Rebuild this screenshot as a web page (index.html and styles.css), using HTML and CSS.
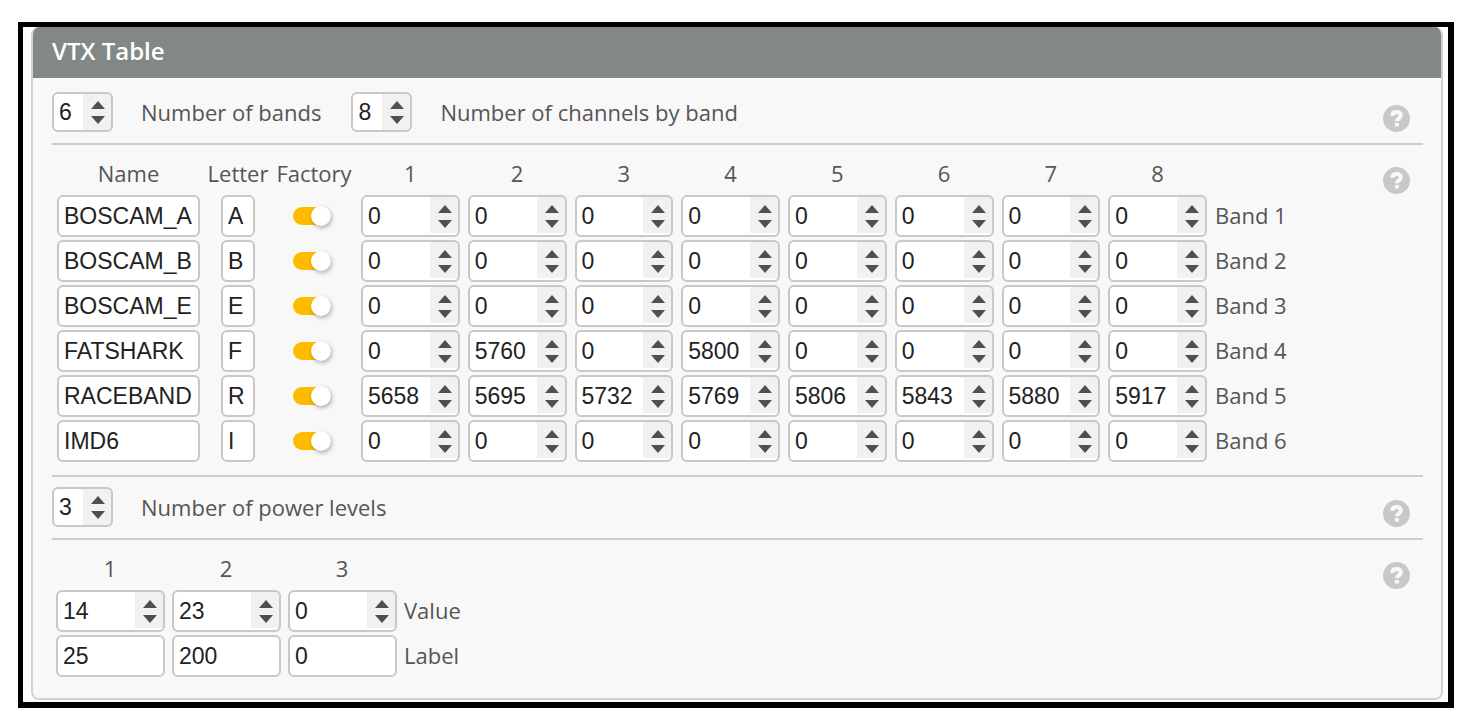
FILE: index.html
```html
<!DOCTYPE html>
<html lang="en">
<head>
<meta charset="utf-8">
<title>VTX Table</title>
<link rel="stylesheet" href="styles.css">
</head>
<body>
<main class="frame">
  <section class="panel">
    <h1 class="panel-title">VTX Table</h1>
    <div class="panel-body">
      <div class="section counts">
        <input class="field number count" type="number" id="bands" value="6">
        <label class="count-label" for="bands">Number of bands</label>
        <input class="field number count" type="number" id="channels" value="8">
        <label class="count-label" for="channels">Number of channels by band</label>
        <button class="help" type="button" aria-label="Help on bands and channels"><svg viewBox="0 0 27 27"><circle cx="13.500" cy="13.500" r="13.500"/><path d="M9.200 10.900C9.300 8.300 11.100 7 13.500 7c2.500 0 4.300 1.200 4.300 3.500 0 2.900-3.900 2.800-3.900 5.700M13.900 18v3.500"/></svg></button>
      </div>
      <div class="section">
        <table class="bands">
          <colgroup><col class="col-name"><col class="col-letter"><col class="col-factory"><col span="8"><col class="col-band"></colgroup>
          <thead>
            <tr><th>Name</th><th>Letter</th><th>Factory</th><th>1</th><th>2</th><th>3</th><th>4</th><th>5</th><th>6</th><th>7</th><th>8</th><td></td></tr>
          </thead>
          <tbody>
            <tr>
              <td><input class="field name" aria-label="Band 1 name" value="BOSCAM_A"></td>
              <td><input class="field letter" aria-label="Band 1 letter" value="A"></td>
              <td><input class="toggle" type="checkbox" aria-label="Band 1 factory" checked></td>
              <td><input class="field number" type="number" aria-label="Band 1 channel 1" value="0"></td>
              <td><input class="field number" type="number" aria-label="Band 1 channel 2" value="0"></td>
              <td><input class="field number" type="number" aria-label="Band 1 channel 3" value="0"></td>
              <td><input class="field number" type="number" aria-label="Band 1 channel 4" value="0"></td>
              <td><input class="field number" type="number" aria-label="Band 1 channel 5" value="0"></td>
              <td><input class="field number" type="number" aria-label="Band 1 channel 6" value="0"></td>
              <td><input class="field number" type="number" aria-label="Band 1 channel 7" value="0"></td>
              <td><input class="field number" type="number" aria-label="Band 1 channel 8" value="0"></td>
              <th class="row-label" scope="row">Band 1</th>
            </tr>
            <tr>
              <td><input class="field name" aria-label="Band 2 name" value="BOSCAM_B"></td>
              <td><input class="field letter" aria-label="Band 2 letter" value="B"></td>
              <td><input class="toggle" type="checkbox" aria-label="Band 2 factory" checked></td>
              <td><input class="field number" type="number" aria-label="Band 2 channel 1" value="0"></td>
              <td><input class="field number" type="number" aria-label="Band 2 channel 2" value="0"></td>
              <td><input class="field number" type="number" aria-label="Band 2 channel 3" value="0"></td>
              <td><input class="field number" type="number" aria-label="Band 2 channel 4" value="0"></td>
              <td><input class="field number" type="number" aria-label="Band 2 channel 5" value="0"></td>
              <td><input class="field number" type="number" aria-label="Band 2 channel 6" value="0"></td>
              <td><input class="field number" type="number" aria-label="Band 2 channel 7" value="0"></td>
              <td><input class="field number" type="number" aria-label="Band 2 channel 8" value="0"></td>
              <th class="row-label" scope="row">Band 2</th>
            </tr>
            <tr>
              <td><input class="field name" aria-label="Band 3 name" value="BOSCAM_E"></td>
              <td><input class="field letter" aria-label="Band 3 letter" value="E"></td>
              <td><input class="toggle" type="checkbox" aria-label="Band 3 factory" checked></td>
              <td><input class="field number" type="number" aria-label="Band 3 channel 1" value="0"></td>
              <td><input class="field number" type="number" aria-label="Band 3 channel 2" value="0"></td>
              <td><input class="field number" type="number" aria-label="Band 3 channel 3" value="0"></td>
              <td><input class="field number" type="number" aria-label="Band 3 channel 4" value="0"></td>
              <td><input class="field number" type="number" aria-label="Band 3 channel 5" value="0"></td>
              <td><input class="field number" type="number" aria-label="Band 3 channel 6" value="0"></td>
              <td><input class="field number" type="number" aria-label="Band 3 channel 7" value="0"></td>
              <td><input class="field number" type="number" aria-label="Band 3 channel 8" value="0"></td>
              <th class="row-label" scope="row">Band 3</th>
            </tr>
            <tr>
              <td><input class="field name" aria-label="Band 4 name" value="FATSHARK"></td>
              <td><input class="field letter" aria-label="Band 4 letter" value="F"></td>
              <td><input class="toggle" type="checkbox" aria-label="Band 4 factory" checked></td>
              <td><input class="field number" type="number" aria-label="Band 4 channel 1" value="0"></td>
              <td><input class="field number" type="number" aria-label="Band 4 channel 2" value="5760"></td>
              <td><input class="field number" type="number" aria-label="Band 4 channel 3" value="0"></td>
              <td><input class="field number" type="number" aria-label="Band 4 channel 4" value="5800"></td>
              <td><input class="field number" type="number" aria-label="Band 4 channel 5" value="0"></td>
              <td><input class="field number" type="number" aria-label="Band 4 channel 6" value="0"></td>
              <td><input class="field number" type="number" aria-label="Band 4 channel 7" value="0"></td>
              <td><input class="field number" type="number" aria-label="Band 4 channel 8" value="0"></td>
              <th class="row-label" scope="row">Band 4</th>
            </tr>
            <tr>
              <td><input class="field name" aria-label="Band 5 name" value="RACEBAND"></td>
              <td><input class="field letter" aria-label="Band 5 letter" value="R"></td>
              <td><input class="toggle" type="checkbox" aria-label="Band 5 factory" checked></td>
              <td><input class="field number" type="number" aria-label="Band 5 channel 1" value="5658"></td>
              <td><input class="field number" type="number" aria-label="Band 5 channel 2" value="5695"></td>
              <td><input class="field number" type="number" aria-label="Band 5 channel 3" value="5732"></td>
              <td><input class="field number" type="number" aria-label="Band 5 channel 4" value="5769"></td>
              <td><input class="field number" type="number" aria-label="Band 5 channel 5" value="5806"></td>
              <td><input class="field number" type="number" aria-label="Band 5 channel 6" value="5843"></td>
              <td><input class="field number" type="number" aria-label="Band 5 channel 7" value="5880"></td>
              <td><input class="field number" type="number" aria-label="Band 5 channel 8" value="5917"></td>
              <th class="row-label" scope="row">Band 5</th>
            </tr>
            <tr>
              <td><input class="field name" aria-label="Band 6 name" value="IMD6"></td>
              <td><input class="field letter" aria-label="Band 6 letter" value="I"></td>
              <td><input class="toggle" type="checkbox" aria-label="Band 6 factory" checked></td>
              <td><input class="field number" type="number" aria-label="Band 6 channel 1" value="0"></td>
              <td><input class="field number" type="number" aria-label="Band 6 channel 2" value="0"></td>
              <td><input class="field number" type="number" aria-label="Band 6 channel 3" value="0"></td>
              <td><input class="field number" type="number" aria-label="Band 6 channel 4" value="0"></td>
              <td><input class="field number" type="number" aria-label="Band 6 channel 5" value="0"></td>
              <td><input class="field number" type="number" aria-label="Band 6 channel 6" value="0"></td>
              <td><input class="field number" type="number" aria-label="Band 6 channel 7" value="0"></td>
              <td><input class="field number" type="number" aria-label="Band 6 channel 8" value="0"></td>
              <th class="row-label" scope="row">Band 6</th>
            </tr>
          </tbody>
        </table>
        <button class="help help-table" type="button" aria-label="Help on the band table"><svg viewBox="0 0 27 27"><circle cx="13.500" cy="13.500" r="13.500"/><path d="M9.200 10.900C9.300 8.300 11.100 7 13.500 7c2.500 0 4.300 1.200 4.300 3.500 0 2.900-3.900 2.800-3.900 5.700M13.900 18v3.500"/></svg></button>
      </div>
      <div class="section counts">
        <input class="field number count" type="number" id="levels" value="3">
        <label class="count-label" for="levels">Number of power levels</label>
        <button class="help" type="button" aria-label="Help on power levels"><svg viewBox="0 0 27 27"><circle cx="13.500" cy="13.500" r="13.500"/><path d="M9.200 10.900C9.300 8.300 11.100 7 13.500 7c2.500 0 4.300 1.200 4.300 3.500 0 2.900-3.900 2.800-3.900 5.700M13.900 18v3.500"/></svg></button>
      </div>
      <div class="section">
        <table class="powers">
          <colgroup><col class="col-power" span="3"><col class="col-band"></colgroup>
          <thead><tr><th>1</th><th>2</th><th>3</th><td></td></tr></thead>
          <tbody>
            <tr>
              <td><input class="field number" type="number" aria-label="Level 1 value" value="14"></td>
              <td><input class="field number" type="number" aria-label="Level 2 value" value="23"></td>
              <td><input class="field number" type="number" aria-label="Level 3 value" value="0"></td>
              <th class="row-label" scope="row">Value</th>
            </tr>
            <tr>
              <td><input class="field" aria-label="Level 1 label" value="25"></td>
              <td><input class="field" aria-label="Level 2 label" value="200"></td>
              <td><input class="field" aria-label="Level 3 label" value="0"></td>
              <th class="row-label" scope="row">Label</th>
            </tr>
          </tbody>
        </table>
        <button class="help help-table" type="button" aria-label="Help on the power table"><svg viewBox="0 0 27 27"><circle cx="13.500" cy="13.500" r="13.500"/><path d="M9.200 10.900C9.300 8.300 11.100 7 13.500 7c2.500 0 4.300 1.200 4.300 3.500 0 2.900-3.900 2.800-3.900 5.700M13.900 18v3.500"/></svg></button>
      </div>
    </div>
  </section>
</main>
</body>
</html>
```
FILE: styles.css
```css
* { box-sizing: border-box; }

body {
  margin: 0;
  padding: 22px 13px 10px 18px;
  background: #fff;
  color: #555;
  font: 22px/30px "Open Sans", "Noto Sans", sans-serif;
}

.frame {
  padding: 0 5px 2px 8px;
  border: solid #000;
  border-width: 5px 6px 6px 5px;
}

.panel {
  overflow: hidden;
  border: 2px solid #d2d2d2;
  border-top: 0;
  border-radius: 8px;
  background: #f8f8f8;
}

.panel-title {
  margin: 0;
  padding: 9px 19px 12px;
  background: #828885;
  color: #fff;
  font-size: 24px;
  font-weight: 600;
  line-height: 30px;
}

.panel-body { padding: 4px 18px 18px 19px; }

.section {
  display: flex;
  align-items: flex-start;
  justify-content: space-between;
  padding-bottom: 10px;
  border-bottom: 2px solid #ccc;
}

.section:last-child {
  padding-bottom: 0;
  border-bottom: 0;
}

.counts {
  align-items: center;
  justify-content: flex-start;
  padding: 10px 0 11px;
}

.count-label { margin: 0 30px 0 28px; }

.help {
  flex: none;
  width: 27px;
  height: 27px;
  margin: 0 13px 0 auto;
  padding: 0;
  border: 0;
  background: none;
}

.counts .help { margin-top: 12px; }
.help-table { margin-top: 22px; }

.help svg { display: block; }
.help circle { fill: #c8c8c8; }

.help path {
  fill: none;
  stroke: #f8f8f8;
  stroke-width: 4;
}

table {
  border-collapse: collapse;
  table-layout: fixed;
}

.bands { width: 1239px; }
.powers { width: 428px; }
.col-name { width: 153px; }
.col-letter { width: 66px; }
.col-factory { width: 86px; }
.col-power { width: 116px; }
.col-band { width: 80px; }

th {
  padding: 0;
  font-weight: 400;
  white-space: nowrap;
}

thead th {
  height: 50px;
  padding-bottom: 7px;
  vertical-align: bottom;
}

td {
  padding: 0 4px 3px;
  text-align: center;
}

.powers td { padding-right: 3px; }

.row-label {
  padding: 0 0 6px 4px;
  text-align: left;
}

.field {
  display: block;
  width: 100%;
  height: 42px;
  margin: 0 auto;
  padding: 0 5px;
  border: 2px solid #c8c8c8;
  border-radius: 6px;
  background-color: #fff;
  color: #222;
  font: 23px "Liberation Sans", Arial, sans-serif;
}

.name { width: 143px; }
.letter { width: 34px; }

.number {
  appearance: textfield;
  padding-right: 28px;
  background-image:
    url("data:image/svg+xml,%3Csvg xmlns='http://www.w3.org/2000/svg' width='14' height='23'%3E%3Cpath fill='%23505050' d='M0 8 7 0l7 8zM0 15h14l-7 8z'/%3E%3C/svg%3E"),
    linear-gradient(#f1f1f1, #f1f1f1);
  background-position: right 6px center, right 0 top 0;
  background-size: 14px 23px, 28px 36px;
  background-repeat: no-repeat;
}

.number::-webkit-inner-spin-button { appearance: none; }

.count {
  flex: none;
  width: 61px;
  height: 40px;
  margin: 0;
}

.toggle {
  display: flex;
  appearance: none;
  align-items: center;
  justify-content: flex-end;
  width: 38px;
  height: 18px;
  margin: 0 0 0 18px;
  border-radius: 9px;
  background: #ffbb00;
}

.toggle::before {
  content: "";
  flex: none;
  width: 20px;
  height: 20px;
  border-radius: 50%;
  background: #fff;
  box-shadow: 1px 2px 4px #0000004d;
}

.toggle:not(:checked) {
  justify-content: flex-start;
  background: #bbb;
}
```
